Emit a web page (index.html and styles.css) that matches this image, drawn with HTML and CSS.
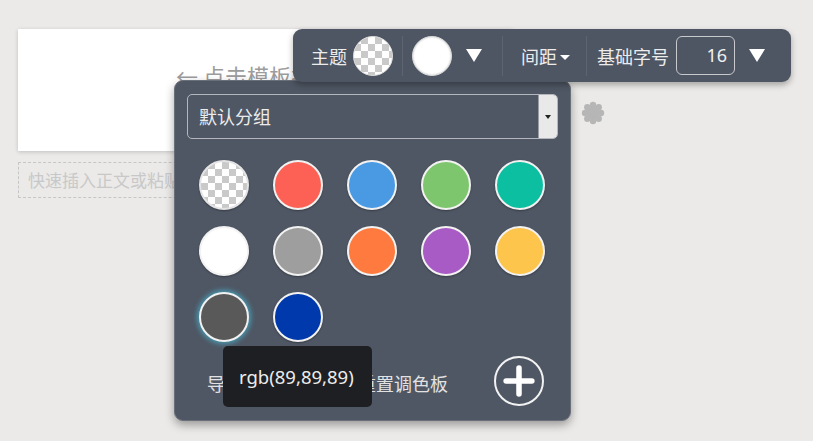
FILE: index.html
```html
<!DOCTYPE html>
<html lang="zh">
<head>
<meta charset="utf-8">
<link rel="stylesheet" href="styles.css">
</head>
<body>
<div class="page">
  <div class="card">
    <div class="hint">← 点击模板插入内容</div>
  </div>
  <div class="quick">快速插入正文或粘贴内容</div>

  <svg class="spinner" viewBox="0 0 24 24" width="24" height="24">
    <g fill="#b6b6b6">
      <circle cx="12" cy="12" r="6.5"/>
      <circle cx="12" cy="4" r="3.2"/>
      <circle cx="12" cy="20" r="3.2"/>
      <circle cx="4" cy="12" r="3.2"/>
      <circle cx="20" cy="12" r="3.2"/>
      <circle cx="6.3" cy="6.3" r="3.2"/>
      <circle cx="17.7" cy="6.3" r="3.2"/>
      <circle cx="6.3" cy="17.7" r="3.2"/>
      <circle cx="17.7" cy="17.7" r="3.2"/>
    </g>
  </svg>

  <div class="panel">
    <div class="select">
      <span class="select-text">默认分组</span>
      <span class="select-btn"><span class="tiny-tri"></span></span>
    </div>
    <div class="swatches">
      <span class="sw checker"></span>
      <span class="sw" style="background:#fd6155"></span>
      <span class="sw" style="background:#4a99e3"></span>
      <span class="sw" style="background:#7ec66e"></span>
      <span class="sw" style="background:#0dbfa1"></span>
      <span class="sw" style="background:#ffffff"></span>
      <span class="sw" style="background:#9e9e9e"></span>
      <span class="sw" style="background:#fe7a3f"></span>
      <span class="sw" style="background:#a95bc5"></span>
      <span class="sw" style="background:#fec54c"></span>
      <span class="sw selected" style="background:rgb(89,89,89)"></span>
      <span class="sw" style="background:#0039ab"></span>
    </div>
    <div class="actions">
      <span class="link l1">导入</span>
      <span class="link l2">导出</span>
      <span class="link">重置调色板</span>
      <span class="plus">
        <svg viewBox="0 0 50 50" width="46" height="46">
          <path d="M25 11 V39 M11 25 H39" stroke="#fff" stroke-width="6" stroke-linecap="round" fill="none"/>
        </svg>
      </span>
    </div>
  </div>

  <div class="toolbar">
    <span class="tb-label">主题</span>
    <span class="tb-circle checker"></span>
    <span class="sep"></span>
    <span class="tb-circle white"></span>
    <span class="tri"></span>
    <span class="sep sep2"></span>
    <span class="tb-label">间距</span>
    <span class="mini-tri"></span>
    <span class="sep sep3"></span>
    <span class="tb-label">基础字号</span>
    <span class="num">16</span>
    <span class="tri tri2"></span>
  </div>

  <div class="tooltip">rgb(89,89,89)</div>
</div>
</body>
</html>
```

FILE: styles.css
```css
html, body {
  margin: 0;
  padding: 0;
}
body {
  width: 813px;
  height: 441px;
  overflow: hidden;
  background: #ebeae8;
  font-family: "Noto Sans", "Noto Sans CJK SC", sans-serif;
}
.page {
  position: relative;
  width: 813px;
  height: 441px;
  padding: 29px 0 0 18px;
  box-sizing: border-box;
}
.card {
  width: 495px;
  height: 122px;
  background: #fff;
  box-shadow: 0 1px 4px rgba(0, 0, 0, 0.18);
  padding: 31px 0 0 158px;
  box-sizing: border-box;
  overflow: hidden;
}
.hint {
  font-family: "Noto Sans CJK SC", sans-serif;
  font-size: 22px;
  line-height: 30px;
  color: #9c9c9c;
  white-space: nowrap;
}
.quick {
  margin-top: 11px;
  width: 495px;
  height: 36px;
  box-sizing: border-box;
  border: 1px dashed #c6c6c6;
  padding-left: 9px;
  font-family: "Noto Sans CJK SC", sans-serif;
  font-size: 17px;
  line-height: 34px;
  color: #c8c8c8;
  white-space: nowrap;
  overflow: hidden;
}
.spinner {
  position: absolute;
  left: 581px;
  top: 101px;
}

.checker {
  background-color: #fff;
  background-image: repeating-conic-gradient(#c9c9c9 0 25%, #ffffff 0 50%);
  background-size: 14px 14px;
}

/* toolbar */
.toolbar {
  position: absolute;
  left: 293px;
  top: 29px;
  width: 498px;
  height: 53px;
  box-sizing: border-box;
  background: #4e5663;
  border-radius: 9px;
  box-shadow: 0 3px 6px rgba(0, 0, 0, 0.3);
  display: flex;
  align-items: center;
  padding-left: 18px;
  z-index: 3;
  color: #ececec;
}
.tb-label {
  font-family: "Noto Sans CJK SC", sans-serif;
  font-size: 18px;
  line-height: 24px;
  white-space: nowrap;
}
.tb-circle {
  width: 40px;
  height: 40px;
  border-radius: 50%;
  box-sizing: border-box;
  margin-left: 6px;
  border: 1px solid #d8d8d8;
}
.tb-circle.white {
  background: #fff;
  margin-left: 9px;
  box-shadow: inset 0 0 2px rgba(0, 0, 0, 0.25);
}
.sep {
  width: 1px;
  height: 40px;
  background: #5d6471;
  margin-left: 9px;
}
.tri {
  width: 0;
  height: 0;
  border-left: 8px solid transparent;
  border-right: 8px solid transparent;
  border-top: 13px solid #fff;
  margin-left: 14px;
}
.sep2 {
  margin-left: 20px;
  margin-right: 18px;
}
.mini-tri {
  width: 0;
  height: 0;
  border-left: 5px solid transparent;
  border-right: 5px solid transparent;
  border-top: 5px solid #fff;
  margin-left: 3px;
  margin-top: 3px;
}
.sep3 {
  margin-left: 16px;
  margin-right: 10px;
}
.num {
  width: 59px;
  height: 39px;
  box-sizing: border-box;
  border: 1.5px solid #c7c9cc;
  border-radius: 6px;
  margin-left: 7px;
  text-align: right;
  padding-right: 7px;
  font-size: 18px;
  line-height: 36px;
  color: #f0f0f0;
}
.tri2 {
  margin-left: 14px;
  border-left-width: 8.5px;
  border-right-width: 8.5px;
}

/* panel */
.panel {
  position: absolute;
  left: 174px;
  top: 80px;
  width: 397px;
  height: 341px;
  box-sizing: border-box;
  background: #4f5764;
  border-radius: 9px;
  border: 1px solid #6a707a;
  box-shadow: 0 4px 10px rgba(0, 0, 0, 0.35);
  padding: 13px 12px 0 12px;
  z-index: 2;
}
.select {
  height: 45px;
  box-sizing: border-box;
  border: 1px solid #b4b8be;
  border-radius: 5px;
  display: flex;
  align-items: stretch;
  overflow: hidden;
}
.select-text {
  flex: 1;
  padding-left: 11px;
  font-family: "Noto Sans CJK SC", sans-serif;
  font-size: 18px;
  line-height: 43px;
  color: #ececec;
}
.select-btn {
  width: 18px;
  background: #e9e9e9;
  border-left: 1px solid #9a9da2;
  display: flex;
  align-items: center;
  justify-content: center;
}
.tiny-tri {
  width: 0;
  height: 0;
  border-left: 3.5px solid transparent;
  border-right: 3.5px solid transparent;
  border-top: 4px solid #222;
}
.swatches {
  margin-top: 21px;
  padding-left: 12px;
  display: grid;
  grid-template-columns: repeat(5, 50px);
  column-gap: 24px;
  row-gap: 16px;
}
.sw {
  width: 50px;
  height: 50px;
  border-radius: 50%;
  box-sizing: border-box;
  border: 2px solid #f2f2f2;
  box-shadow: 0 1px 2px rgba(0, 0, 0, 0.3);
}
.sw.checker {
  border-color: #e4e4e4;
}
.sw.selected {
  box-shadow: 0 0 5px 2px rgba(70, 190, 220, 0.65);
}
.actions {
  margin-top: 14px;
  padding-left: 20px;
  padding-right: 14px;
  display: flex;
  align-items: center;
  height: 50px;
}
.link {
  font-family: "Noto Sans CJK SC", sans-serif;
  font-size: 18px;
  line-height: 24px;
  color: #e2e2e2;
  white-space: nowrap;
  margin-top: 4px;
}
.l1 { margin-right: 19px; }
.l2 { margin-right: 60px; }
.plus {
  margin-left: auto;
  width: 50px;
  height: 50px;
  box-sizing: border-box;
  border: 2px solid #f2f2f2;
  border-radius: 50%;
  display: flex;
  align-items: center;
  justify-content: center;
}

/* tooltip */
.tooltip {
  position: absolute;
  left: 223px;
  top: 346px;
  width: 149px;
  height: 61px;
  box-sizing: border-box;
  background: #1e1f22;
  border-radius: 5px;
  color: #ececec;
  font-size: 18.5px;
  line-height: 24px;
  padding: 19px 0 0 16px;
  z-index: 4;
  white-space: nowrap;
}
```
